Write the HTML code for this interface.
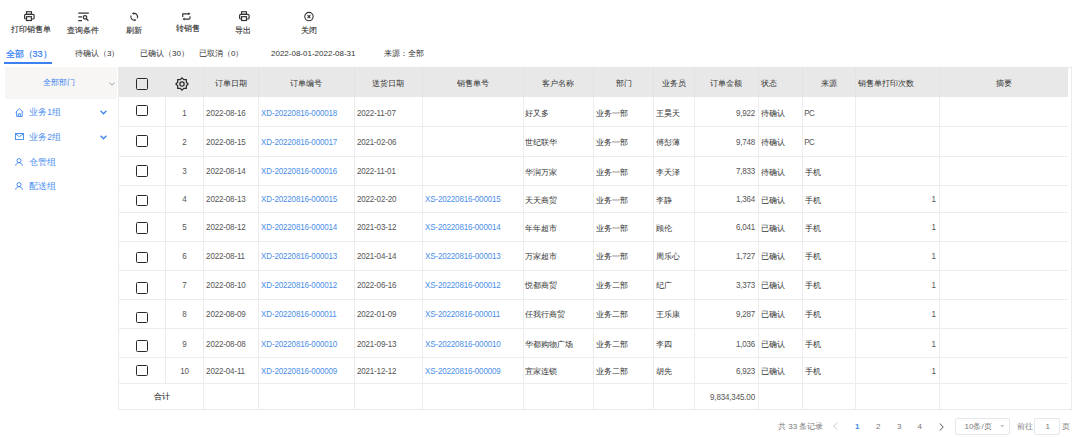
<!DOCTYPE html><html><head><meta charset="utf-8"><style>
*{box-sizing:border-box}
html,body{margin:0;padding:0}
body{width:1080px;height:437px;overflow:hidden;background:#fff;position:relative;font-family:"Liberation Sans",sans-serif;color:#333}
.a{position:absolute;white-space:nowrap;line-height:1}
.s{-webkit-text-stroke:0.12px currentColor}
.t8{font-size:8px}
.cb{position:absolute;width:11.8px;height:11.8px;border:1.7px solid #2a2a2a;border-radius:1.5px}
.hl{position:absolute;height:1px;background:#ededed}
.vl{position:absolute;width:1px;background:#ededed}
.lnk{color:#4b8ee8}
svg{position:absolute;overflow:visible}
</style></head><body><div class="a s" style="left:10.9px;top:25.6px;font-size:8px;color:#333">打印销售单</div>
<div class="a s" style="left:67.3px;top:27.400000000000002px;font-size:8px;color:#333">查询条件</div>
<div class="a s" style="left:126.2px;top:27.400000000000002px;font-size:8px;color:#333">刷新</div>
<div class="a s" style="left:175.6px;top:25.400000000000002px;font-size:8px;color:#333">转销售</div>
<div class="a s" style="left:235.4px;top:26.8px;font-size:8px;color:#333">导出</div>
<div class="a s" style="left:300.7px;top:27.1px;font-size:8px;color:#333">关闭</div>
<svg style="left:24px;top:11px" width="11" height="11" viewBox="0 0 11 11">
<rect x="2.55" y="0.75" width="4.9" height="2.6" fill="none" stroke="#333" stroke-width="1.15"/>
<rect x="0.6" y="3.3" width="9.5" height="4.7" rx="1.1" fill="none" stroke="#333" stroke-width="1.2"/>
<rect x="2.55" y="5.7" width="4.9" height="3.8" fill="#fff" stroke="#333" stroke-width="1.2"/>
</svg>
<svg style="left:238.5px;top:10.9px" width="11" height="11" viewBox="0 0 11 11">
<rect x="2.55" y="0.75" width="4.9" height="2.6" fill="none" stroke="#333" stroke-width="1.15"/>
<rect x="0.6" y="3.3" width="9.5" height="4.7" rx="1.1" fill="none" stroke="#333" stroke-width="1.2"/>
<rect x="2.55" y="5.7" width="4.9" height="3.8" fill="#fff" stroke="#333" stroke-width="1.2"/>
</svg>
<svg style="left:77.8px;top:12px" width="11" height="10" viewBox="0 0 11 10">
<path d="M0.3 1.1h10.5M0.3 4.8h3.7M0.3 8.6h3.7" stroke="#333" stroke-width="1.15" fill="none"/>
<circle cx="7.0" cy="5.3" r="1.75" fill="none" stroke="#333" stroke-width="1.25"/>
<path d="M8.3 6.7l2.1 2.1" stroke="#333" stroke-width="1.3"/>
</svg>
<svg style="left:129.8px;top:12.2px" width="9" height="10" viewBox="0 0 9 10">
<path d="M3.38 1.5A3.4 3.4 0 0 1 7.3 6.18" fill="none" stroke="#333" stroke-width="1.15"/>
<path d="M1.1 3.42A3.4 3.4 0 0 0 4.96 8.11" fill="none" stroke="#333" stroke-width="1.15"/>
<path d="M1.9 1.86L4.18 2.64L3.56 0.12z" fill="#333"/>
<path d="M6.42 7.78L4.76 9.48L4.18 6.96z" fill="#333"/>
</svg>
<svg style="left:181.7px;top:11.7px" width="10" height="9" viewBox="0 0 10 9">
<path d="M0.75 4.9V1.8h6.2" fill="none" stroke="#333" stroke-width="1.15"/>
<path d="M8.0 4.2v1.9a1 1 0 0 1 -1 1H2.2" fill="none" stroke="#333" stroke-width="1.15"/>
<path d="M6.4 0.3L8.5 1.8 6.4 3.3z" fill="#333"/>
<path d="M2.6 5.6L0.5 7.1 2.6 8.6z" fill="#333"/>
</svg>
<svg style="left:304.4px;top:12.3px" width="10" height="10" viewBox="0 0 10 10">
<circle cx="4.95" cy="4.6" r="4.2" fill="none" stroke="#333" stroke-width="1.1"/>
<path d="M3.5 3.15l2.9 2.9M6.4 3.15l-2.9 2.9" stroke="#333" stroke-width="1.15"/>
</svg>
<div class="a" style="left:5.5px;top:49.5px;font-size:9px;color:#2f7cf6;font-weight:normal;-webkit-text-stroke:0.2px #2f7cf6">全部（33）</div>
<div style="position:absolute;left:4px;top:61.8px;width:48px;height:2px;background:#3b82f0"></div>
<div class="a" style="left:75px;top:50px;font-size:8px;color:#333">待确认（3）</div>
<div class="a" style="left:140px;top:50px;font-size:8px;color:#333">已确认（30）</div>
<div class="a" style="left:199px;top:50px;font-size:8px;color:#333">已取消（0）</div>
<div class="a l" style="left:271px;top:49.8px;font-size:8px;color:#333">2022-08-01-2022-08-31</div>
<div class="a" style="left:384px;top:50px;font-size:8px;color:#333">来源：全部</div>
<div style="position:absolute;left:5px;top:67px;width:112px;height:31.5px;background:#f8f5f5"></div>
<div class="a" style="left:43.2px;top:79.2px;font-size:8px;color:#3d86ee">全部部门</div>
<svg style="left:109px;top:81.5px" width="6" height="4" viewBox="0 0 6 4"><path d="M0.4 0.5L3 3.2 5.6 0.5" fill="none" stroke="#999" stroke-width="0.9"/></svg>
<div class="a" style="left:29.2px;top:107.9px;font-size:8.5px;color:#4a8ef0">业务1组</div>
<svg style="left:14.8px;top:108.0px" width="9" height="9" viewBox="0 0 9 9"><path d="M0.6 4.2L4.4 0.7 8.2 4.2M1.6 3.4V8.4h5.6V3.4M3.4 8.4V5.8h2v2.6" fill="none" stroke="#3d86ee" stroke-width="0.9"/></svg>
<svg style="left:99.7px;top:110.2px" width="7" height="5" viewBox="0 0 7 5"><path d="M0.6 0.8L3.5 3.8 6.4 0.8" fill="none" stroke="#3d86ee" stroke-width="1.3"/></svg>
<div class="a" style="left:29.2px;top:132.89999999999998px;font-size:8.5px;color:#4a8ef0">业务2组</div>
<svg style="left:14.8px;top:133.0px" width="9" height="7" viewBox="0 0 9 7"><rect x="0.5" y="0.5" width="8" height="6" fill="none" stroke="#3d86ee" stroke-width="0.9"/><path d="M0.8 1L4.5 3.8 8.2 1" fill="none" stroke="#3d86ee" stroke-width="0.9"/></svg>
<svg style="left:99.7px;top:135.2px" width="7" height="5" viewBox="0 0 7 5"><path d="M0.6 0.8L3.5 3.8 6.4 0.8" fill="none" stroke="#3d86ee" stroke-width="1.3"/></svg>
<div class="a" style="left:29.2px;top:157.89999999999998px;font-size:8.5px;color:#4a8ef0">仓管组</div>
<svg style="left:15px;top:158.2px" width="8" height="8" viewBox="0 0 8 8"><circle cx="4" cy="2.6" r="2" fill="none" stroke="#3d86ee" stroke-width="0.9"/><path d="M0.8 7.8C0.8 5.6 2.2 4.8 4 4.8S7.2 5.6 7.2 7.8" fill="none" stroke="#3d86ee" stroke-width="0.9"/></svg>
<div class="a" style="left:29.2px;top:181.89999999999998px;font-size:8.5px;color:#4a8ef0">配送组</div>
<svg style="left:15px;top:182.2px" width="8" height="8" viewBox="0 0 8 8"><circle cx="4" cy="2.6" r="2" fill="none" stroke="#3d86ee" stroke-width="0.9"/><path d="M0.8 7.8C0.8 5.6 2.2 4.8 4 4.8S7.2 5.6 7.2 7.8" fill="none" stroke="#3d86ee" stroke-width="0.9"/></svg>
<div style="position:absolute;left:118px;top:67px;width:954px;height:343px;border:1px solid #ebebeb"></div>
<div style="position:absolute;left:118px;top:67px;width:950.4000000000001px;height:30px;background:#e8e8e8"></div>
<div class="vl" style="left:203px;top:67px;height:30px;background:#e2e2e2"></div>
<div class="vl" style="left:258px;top:67px;height:30px;background:#e2e2e2"></div>
<div class="vl" style="left:354px;top:67px;height:30px;background:#e2e2e2"></div>
<div class="vl" style="left:422px;top:67px;height:30px;background:#e2e2e2"></div>
<div class="vl" style="left:523px;top:67px;height:30px;background:#e2e2e2"></div>
<div class="vl" style="left:593px;top:67px;height:30px;background:#e2e2e2"></div>
<div class="vl" style="left:653px;top:67px;height:30px;background:#e2e2e2"></div>
<div class="vl" style="left:694px;top:67px;height:30px;background:#e2e2e2"></div>
<div class="vl" style="left:758px;top:67px;height:30px;background:#e2e2e2"></div>
<div class="vl" style="left:802px;top:67px;height:30px;background:#e2e2e2"></div>
<div class="vl" style="left:855px;top:67px;height:30px;background:#e2e2e2"></div>
<div class="vl" style="left:939px;top:67px;height:30px;background:#e2e2e2"></div>
<div class="vl" style="left:165px;top:97px;height:286px"></div>
<div class="vl" style="left:203px;top:97px;height:312px"></div>
<div class="vl" style="left:258px;top:97px;height:312px"></div>
<div class="vl" style="left:354px;top:97px;height:312px"></div>
<div class="vl" style="left:422px;top:97px;height:312px"></div>
<div class="vl" style="left:523px;top:97px;height:312px"></div>
<div class="vl" style="left:593px;top:97px;height:312px"></div>
<div class="vl" style="left:653px;top:97px;height:312px"></div>
<div class="vl" style="left:694px;top:97px;height:312px"></div>
<div class="vl" style="left:758px;top:97px;height:312px"></div>
<div class="vl" style="left:802px;top:97px;height:312px"></div>
<div class="vl" style="left:855px;top:97px;height:312px"></div>
<div class="vl" style="left:939px;top:97px;height:312px"></div>
<div class="hl" style="left:118px;top:126px;width:950.4000000000001px"></div>
<div class="hl" style="left:118px;top:156px;width:950.4000000000001px"></div>
<div class="hl" style="left:118px;top:185px;width:950.4000000000001px"></div>
<div class="hl" style="left:118px;top:212px;width:950.4000000000001px"></div>
<div class="hl" style="left:118px;top:241px;width:950.4000000000001px"></div>
<div class="hl" style="left:118px;top:270px;width:950.4000000000001px"></div>
<div class="hl" style="left:118px;top:299px;width:950.4000000000001px"></div>
<div class="hl" style="left:118px;top:328px;width:950.4000000000001px"></div>
<div class="hl" style="left:118px;top:357px;width:950.4000000000001px"></div>
<div class="hl" style="left:118px;top:383px;width:950.4000000000001px"></div>
<div class="a" style="left:203.6px;top:79.8px;width:54.70000000000002px;text-align:center;font-size:8px;color:#333">订单日期</div>
<div class="a" style="left:258.3px;top:79.8px;width:96.09999999999997px;text-align:center;font-size:8px;color:#333">订单编号</div>
<div class="a" style="left:354.4px;top:79.8px;width:68.0px;text-align:center;font-size:8px;color:#333">送货日期</div>
<div class="a" style="left:422.4px;top:79.8px;width:100.60000000000002px;text-align:center;font-size:8px;color:#333">销售单号</div>
<div class="a" style="left:523px;top:79.8px;width:70.60000000000002px;text-align:center;font-size:8px;color:#333">客户名称</div>
<div class="a" style="left:593.6px;top:79.8px;width:60.0px;text-align:center;font-size:8px;color:#333">部门</div>
<div class="a" style="left:653.6px;top:79.8px;width:41.10000000000002px;text-align:center;font-size:8px;color:#333">业务员</div>
<div class="a" style="left:694.7px;top:79.8px;width:63.59999999999991px;text-align:center;font-size:8px;color:#333">订单金额</div>
<div class="a" style="left:760.8px;top:79.8px;font-size:8px;color:#333">状态</div>
<div class="a" style="left:802.4px;top:79.8px;width:52.60000000000002px;text-align:center;font-size:8px;color:#333">来源</div>
<div class="a" style="left:857.5px;top:79.8px;font-size:8px;color:#333">销售单打印次数</div>
<div class="a" style="left:939.4px;top:79.8px;width:129.0000000000001px;text-align:center;font-size:8px;color:#333">摘要</div>
<div class="cb" style="left:136.3px;top:78.3px"></div>
<svg style="left:175px;top:77px" width="14" height="14" viewBox="0 0 14 14">
<path d="M7.00 0.90L8.80 2.66L11.31 2.69L11.34 5.20L13.10 7.00L11.34 8.80L11.31 11.31L8.80 11.34L7.00 13.10L5.20 11.34L2.69 11.31L2.66 8.80L0.90 7.00L2.66 5.20L2.69 2.69L5.20 2.66Z" fill="none" stroke="#2b2b2b" stroke-width="1.25" stroke-linejoin="miter"/>
<circle cx="7" cy="7" r="2.15" fill="none" stroke="#2b2b2b" stroke-width="1.3"/>
</svg>
<div class="cb" style="left:136.3px;top:104.5px"></div>
<div class="a l" style="left:165.6px;top:109.9px;width:38.0px;text-align:center;font-size:8px;color:#555;transform:scaleY(1.12);color:#555">1</div>
<div class="a l " style="left:206.1px;top:109.9px;font-size:8px;color:#555;transform:scaleY(1.12);letter-spacing:-0.15px;">2022-08-16</div>
<div class="a l " style="left:261.1px;top:109.9px;font-size:8px;color:#555;transform:scaleY(1.12);letter-spacing:-0.15px;color:#4b8ee8">XD-20220816-000018</div>
<div class="a l " style="left:356.9px;top:109.9px;font-size:8px;color:#555;transform:scaleY(1.12);letter-spacing:-0.15px;">2022-11-07</div>
<div class="a" style="left:525.2px;top:110.25px;font-size:8px;color:#333;">好又多</div>
<div class="a" style="left:596.2px;top:110.25px;font-size:8px;color:#333;">业务一部</div>
<div class="a" style="left:656.0px;top:110.25px;font-size:8px;color:#333;">王昊天</div>
<div class="a l" style="right:325.00000000000006px;top:109.9px;font-size:8px;color:#555;transform:scaleY(1.12);letter-spacing:-0.2px;">9,922</div>
<div class="a" style="left:760.6999999999999px;top:110.25px;font-size:8px;color:#333;">待确认</div>
<div class="a l " style="left:804.1999999999999px;top:109.9px;font-size:8px;color:#555;transform:scaleY(1.12);letter-spacing:-0.5px;">PC</div>
<div class="cb" style="left:136.3px;top:134.9px"></div>
<div class="a l" style="left:165.6px;top:138.6px;width:38.0px;text-align:center;font-size:8px;color:#555;transform:scaleY(1.12);color:#555">2</div>
<div class="a l " style="left:206.1px;top:138.6px;font-size:8px;color:#555;transform:scaleY(1.12);letter-spacing:-0.15px;">2022-08-15</div>
<div class="a l " style="left:261.1px;top:138.6px;font-size:8px;color:#555;transform:scaleY(1.12);letter-spacing:-0.15px;color:#4b8ee8">XD-20220816-000017</div>
<div class="a l " style="left:356.9px;top:138.6px;font-size:8px;color:#555;transform:scaleY(1.12);letter-spacing:-0.15px;">2021-02-06</div>
<div class="a" style="left:525.2px;top:138.95px;font-size:8px;color:#333;">世纪联华</div>
<div class="a" style="left:596.2px;top:138.95px;font-size:8px;color:#333;">业务一部</div>
<div class="a" style="left:656.0px;top:138.95px;font-size:8px;color:#333;">傅彭薄</div>
<div class="a l" style="right:325.00000000000006px;top:138.6px;font-size:8px;color:#555;transform:scaleY(1.12);letter-spacing:-0.2px;">9,748</div>
<div class="a" style="left:760.6999999999999px;top:138.95px;font-size:8px;color:#333;">待确认</div>
<div class="a l " style="left:804.1999999999999px;top:138.6px;font-size:8px;color:#555;transform:scaleY(1.12);letter-spacing:-0.5px;">PC</div>
<div class="cb" style="left:136.3px;top:165.3px"></div>
<div class="a l" style="left:165.6px;top:168.3px;width:38.0px;text-align:center;font-size:8px;color:#555;transform:scaleY(1.12);color:#555">3</div>
<div class="a l " style="left:206.1px;top:168.3px;font-size:8px;color:#555;transform:scaleY(1.12);letter-spacing:-0.15px;">2022-08-14</div>
<div class="a l " style="left:261.1px;top:168.3px;font-size:8px;color:#555;transform:scaleY(1.12);letter-spacing:-0.15px;color:#4b8ee8">XD-20220816-000016</div>
<div class="a l " style="left:356.9px;top:168.3px;font-size:8px;color:#555;transform:scaleY(1.12);letter-spacing:-0.15px;">2022-11-01</div>
<div class="a" style="left:525.2px;top:168.65px;font-size:8px;color:#333;">华润万家</div>
<div class="a" style="left:596.2px;top:168.65px;font-size:8px;color:#333;">业务一部</div>
<div class="a" style="left:656.0px;top:168.65px;font-size:8px;color:#333;">李天泽</div>
<div class="a l" style="right:325.00000000000006px;top:168.3px;font-size:8px;color:#555;transform:scaleY(1.12);letter-spacing:-0.2px;">7,833</div>
<div class="a" style="left:760.6999999999999px;top:168.65px;font-size:8px;color:#333;">待确认</div>
<div class="a" style="left:805.0px;top:168.65px;font-size:8px;color:#333;">手机</div>
<div class="cb" style="left:136.3px;top:194.6px"></div>
<div class="a l" style="left:165.6px;top:196.20000000000002px;width:38.0px;text-align:center;font-size:8px;color:#555;transform:scaleY(1.12);color:#555">4</div>
<div class="a l " style="left:206.1px;top:196.20000000000002px;font-size:8px;color:#555;transform:scaleY(1.12);letter-spacing:-0.15px;">2022-08-13</div>
<div class="a l " style="left:261.1px;top:196.20000000000002px;font-size:8px;color:#555;transform:scaleY(1.12);letter-spacing:-0.15px;color:#4b8ee8">XD-20220816-000015</div>
<div class="a l " style="left:356.9px;top:196.20000000000002px;font-size:8px;color:#555;transform:scaleY(1.12);letter-spacing:-0.15px;">2022-02-20</div>
<div class="a l " style="left:425.0px;top:196.20000000000002px;font-size:8px;color:#555;transform:scaleY(1.12);letter-spacing:-0.15px;color:#4b8ee8">XS-20220816-000015</div>
<div class="a" style="left:525.2px;top:196.55px;font-size:8px;color:#333;">天天商贸</div>
<div class="a" style="left:596.2px;top:196.55px;font-size:8px;color:#333;">业务一部</div>
<div class="a" style="left:656.0px;top:196.55px;font-size:8px;color:#333;">李静</div>
<div class="a l" style="right:325.00000000000006px;top:196.20000000000002px;font-size:8px;color:#555;transform:scaleY(1.12);letter-spacing:-0.2px;">1,364</div>
<div class="a" style="left:760.6999999999999px;top:196.55px;font-size:8px;color:#333;">已确认</div>
<div class="a" style="left:805.0px;top:196.55px;font-size:8px;color:#333;">手机</div>
<div class="a l" style="right:144.24999999999997px;top:196.20000000000002px;font-size:8px;color:#555;transform:scaleY(1.12);letter-spacing:-0.15px;">1</div>
<div class="cb" style="left:136.3px;top:222.1px"></div>
<div class="a l" style="left:165.6px;top:224.3px;width:38.0px;text-align:center;font-size:8px;color:#555;transform:scaleY(1.12);color:#555">5</div>
<div class="a l " style="left:206.1px;top:224.3px;font-size:8px;color:#555;transform:scaleY(1.12);letter-spacing:-0.15px;">2022-08-12</div>
<div class="a l " style="left:261.1px;top:224.3px;font-size:8px;color:#555;transform:scaleY(1.12);letter-spacing:-0.15px;color:#4b8ee8">XD-20220816-000014</div>
<div class="a l " style="left:356.9px;top:224.3px;font-size:8px;color:#555;transform:scaleY(1.12);letter-spacing:-0.15px;">2021-03-12</div>
<div class="a l " style="left:425.0px;top:224.3px;font-size:8px;color:#555;transform:scaleY(1.12);letter-spacing:-0.15px;color:#4b8ee8">XS-20220816-000014</div>
<div class="a" style="left:525.2px;top:224.65px;font-size:8px;color:#333;">年年超市</div>
<div class="a" style="left:596.2px;top:224.65px;font-size:8px;color:#333;">业务一部</div>
<div class="a" style="left:656.0px;top:224.65px;font-size:8px;color:#333;">顾伦</div>
<div class="a l" style="right:325.00000000000006px;top:224.3px;font-size:8px;color:#555;transform:scaleY(1.12);letter-spacing:-0.2px;">6,041</div>
<div class="a" style="left:760.6999999999999px;top:224.65px;font-size:8px;color:#333;">已确认</div>
<div class="a" style="left:805.0px;top:224.65px;font-size:8px;color:#333;">手机</div>
<div class="a l" style="right:144.24999999999997px;top:224.3px;font-size:8px;color:#555;transform:scaleY(1.12);letter-spacing:-0.15px;">1</div>
<div class="cb" style="left:136.3px;top:251.5px"></div>
<div class="a l" style="left:165.6px;top:253.1px;width:38.0px;text-align:center;font-size:8px;color:#555;transform:scaleY(1.12);color:#555">6</div>
<div class="a l " style="left:206.1px;top:253.1px;font-size:8px;color:#555;transform:scaleY(1.12);letter-spacing:-0.15px;">2022-08-11</div>
<div class="a l " style="left:261.1px;top:253.1px;font-size:8px;color:#555;transform:scaleY(1.12);letter-spacing:-0.15px;color:#4b8ee8">XD-20220816-000013</div>
<div class="a l " style="left:356.9px;top:253.1px;font-size:8px;color:#555;transform:scaleY(1.12);letter-spacing:-0.15px;">2021-04-14</div>
<div class="a l " style="left:425.0px;top:253.1px;font-size:8px;color:#555;transform:scaleY(1.12);letter-spacing:-0.15px;color:#4b8ee8">XS-20220816-000013</div>
<div class="a" style="left:525.2px;top:253.45px;font-size:8px;color:#333;">万家超市</div>
<div class="a" style="left:596.2px;top:253.45px;font-size:8px;color:#333;">业务一部</div>
<div class="a" style="left:656.0px;top:253.45px;font-size:8px;color:#333;">周乐心</div>
<div class="a l" style="right:325.00000000000006px;top:253.1px;font-size:8px;color:#555;transform:scaleY(1.12);letter-spacing:-0.2px;">1,727</div>
<div class="a" style="left:760.6999999999999px;top:253.45px;font-size:8px;color:#333;">已确认</div>
<div class="a" style="left:805.0px;top:253.45px;font-size:8px;color:#333;">手机</div>
<div class="a l" style="right:144.24999999999997px;top:253.1px;font-size:8px;color:#555;transform:scaleY(1.12);letter-spacing:-0.15px;">1</div>
<div class="cb" style="left:136.3px;top:282.0px"></div>
<div class="a l" style="left:165.6px;top:282.09999999999997px;width:38.0px;text-align:center;font-size:8px;color:#555;transform:scaleY(1.12);color:#555">7</div>
<div class="a l " style="left:206.1px;top:282.09999999999997px;font-size:8px;color:#555;transform:scaleY(1.12);letter-spacing:-0.15px;">2022-08-10</div>
<div class="a l " style="left:261.1px;top:282.09999999999997px;font-size:8px;color:#555;transform:scaleY(1.12);letter-spacing:-0.15px;color:#4b8ee8">XD-20220816-000012</div>
<div class="a l " style="left:356.9px;top:282.09999999999997px;font-size:8px;color:#555;transform:scaleY(1.12);letter-spacing:-0.15px;">2022-06-16</div>
<div class="a l " style="left:425.0px;top:282.09999999999997px;font-size:8px;color:#555;transform:scaleY(1.12);letter-spacing:-0.15px;color:#4b8ee8">XS-20220816-000012</div>
<div class="a" style="left:525.2px;top:282.45px;font-size:8px;color:#333;">悦都商贸</div>
<div class="a" style="left:596.2px;top:282.45px;font-size:8px;color:#333;">业务二部</div>
<div class="a" style="left:656.0px;top:282.45px;font-size:8px;color:#333;">纪广</div>
<div class="a l" style="right:325.00000000000006px;top:282.09999999999997px;font-size:8px;color:#555;transform:scaleY(1.12);letter-spacing:-0.2px;">3,373</div>
<div class="a" style="left:760.6999999999999px;top:282.45px;font-size:8px;color:#333;">已确认</div>
<div class="a" style="left:805.0px;top:282.45px;font-size:8px;color:#333;">手机</div>
<div class="a l" style="right:144.24999999999997px;top:282.09999999999997px;font-size:8px;color:#555;transform:scaleY(1.12);letter-spacing:-0.15px;">1</div>
<div class="cb" style="left:136.3px;top:311.7px"></div>
<div class="a l" style="left:165.6px;top:310.7px;width:38.0px;text-align:center;font-size:8px;color:#555;transform:scaleY(1.12);color:#555">8</div>
<div class="a l " style="left:206.1px;top:310.7px;font-size:8px;color:#555;transform:scaleY(1.12);letter-spacing:-0.15px;">2022-08-09</div>
<div class="a l " style="left:261.1px;top:310.7px;font-size:8px;color:#555;transform:scaleY(1.12);letter-spacing:-0.15px;color:#4b8ee8">XD-20220816-000011</div>
<div class="a l " style="left:356.9px;top:310.7px;font-size:8px;color:#555;transform:scaleY(1.12);letter-spacing:-0.15px;">2022-01-09</div>
<div class="a l " style="left:425.0px;top:310.7px;font-size:8px;color:#555;transform:scaleY(1.12);letter-spacing:-0.15px;color:#4b8ee8">XS-20220816-000011</div>
<div class="a" style="left:525.2px;top:311.05px;font-size:8px;color:#333;">任我行商贸</div>
<div class="a" style="left:596.2px;top:311.05px;font-size:8px;color:#333;">业务二部</div>
<div class="a" style="left:656.0px;top:311.05px;font-size:8px;color:#333;">王乐康</div>
<div class="a l" style="right:325.00000000000006px;top:310.7px;font-size:8px;color:#555;transform:scaleY(1.12);letter-spacing:-0.2px;">9,287</div>
<div class="a" style="left:760.6999999999999px;top:311.05px;font-size:8px;color:#333;">已确认</div>
<div class="a" style="left:805.0px;top:311.05px;font-size:8px;color:#333;">手机</div>
<div class="a l" style="right:144.24999999999997px;top:310.7px;font-size:8px;color:#555;transform:scaleY(1.12);letter-spacing:-0.15px;">1</div>
<div class="cb" style="left:136.3px;top:339.9px"></div>
<div class="a l" style="left:165.6px;top:340.5px;width:38.0px;text-align:center;font-size:8px;color:#555;transform:scaleY(1.12);color:#555">9</div>
<div class="a l " style="left:206.1px;top:340.5px;font-size:8px;color:#555;transform:scaleY(1.12);letter-spacing:-0.15px;">2022-08-08</div>
<div class="a l " style="left:261.1px;top:340.5px;font-size:8px;color:#555;transform:scaleY(1.12);letter-spacing:-0.15px;color:#4b8ee8">XD-20220816-000010</div>
<div class="a l " style="left:356.9px;top:340.5px;font-size:8px;color:#555;transform:scaleY(1.12);letter-spacing:-0.15px;">2021-09-13</div>
<div class="a l " style="left:425.0px;top:340.5px;font-size:8px;color:#555;transform:scaleY(1.12);letter-spacing:-0.15px;color:#4b8ee8">XS-20220816-000010</div>
<div class="a" style="left:525.2px;top:340.85px;font-size:8px;color:#333;">华都购物广场</div>
<div class="a" style="left:596.2px;top:340.85px;font-size:8px;color:#333;">业务二部</div>
<div class="a" style="left:656.0px;top:340.85px;font-size:8px;color:#333;">李四</div>
<div class="a l" style="right:325.00000000000006px;top:340.5px;font-size:8px;color:#555;transform:scaleY(1.12);letter-spacing:-0.2px;">1,036</div>
<div class="a" style="left:760.6999999999999px;top:340.85px;font-size:8px;color:#333;">已确认</div>
<div class="a" style="left:805.0px;top:340.85px;font-size:8px;color:#333;">手机</div>
<div class="a l" style="right:144.24999999999997px;top:340.5px;font-size:8px;color:#555;transform:scaleY(1.12);letter-spacing:-0.15px;">1</div>
<div class="cb" style="left:136.3px;top:364.5px"></div>
<div class="a l" style="left:165.6px;top:367.9px;width:38.0px;text-align:center;font-size:8px;color:#555;transform:scaleY(1.12);color:#555">10</div>
<div class="a l " style="left:206.1px;top:367.9px;font-size:8px;color:#555;transform:scaleY(1.12);letter-spacing:-0.15px;">2022-04-11</div>
<div class="a l " style="left:261.1px;top:367.9px;font-size:8px;color:#555;transform:scaleY(1.12);letter-spacing:-0.15px;color:#4b8ee8">XD-20220816-000009</div>
<div class="a l " style="left:356.9px;top:367.9px;font-size:8px;color:#555;transform:scaleY(1.12);letter-spacing:-0.15px;">2021-12-12</div>
<div class="a l " style="left:425.0px;top:367.9px;font-size:8px;color:#555;transform:scaleY(1.12);letter-spacing:-0.15px;color:#4b8ee8">XS-20220816-000009</div>
<div class="a" style="left:525.2px;top:368.25px;font-size:8px;color:#333;">宜家连锁</div>
<div class="a" style="left:596.2px;top:368.25px;font-size:8px;color:#333;">业务二部</div>
<div class="a" style="left:656.0px;top:368.25px;font-size:8px;color:#333;">胡先</div>
<div class="a l" style="right:325.00000000000006px;top:367.9px;font-size:8px;color:#555;transform:scaleY(1.12);letter-spacing:-0.2px;">6,923</div>
<div class="a" style="left:760.6999999999999px;top:368.25px;font-size:8px;color:#333;">已确认</div>
<div class="a" style="left:805.0px;top:368.25px;font-size:8px;color:#333;">手机</div>
<div class="a l" style="right:144.24999999999997px;top:367.9px;font-size:8px;color:#555;transform:scaleY(1.12);letter-spacing:-0.15px;">1</div>
<div class="a s" style="left:118.8px;top:392.8px;width:85.6px;text-align:center;font-size:8px;color:#333">合计</div>
<div class="a l" style="right:325.05000000000007px;top:393.65px;font-size:8px;color:#555;transform:scaleY(1.12);letter-spacing:-0.15px;">9,834,345.00</div>
<div class="a" style="left:778px;top:422.5px;font-size:8px;color:#777">共 33 条记录</div>
<svg style="left:833.4px;top:422.2px" width="5" height="8" viewBox="0 0 5 8"><path d="M4.2 0.5L0.8 4 4.2 7.5" fill="none" stroke="#c0c4cc" stroke-width="0.9"/></svg>
<div class="a" style="left:855.0px;top:422.5px;font-size:8px;color:#3a86f0;font-weight:bold">1</div>
<div class="a" style="left:876px;top:422.5px;font-size:8px;color:#777">2</div>
<div class="a" style="left:897px;top:422.5px;font-size:8px;color:#777">3</div>
<div class="a" style="left:917.6px;top:422.5px;font-size:8px;color:#777">4</div>
<svg style="left:939.3px;top:423px" width="5" height="8" viewBox="0 0 5 8"><path d="M0.8 0.5L4.2 4 0.8 7.5" fill="none" stroke="#444" stroke-width="0.9"/></svg>
<div style="position:absolute;left:955.3px;top:417.5px;width:54.7px;height:17px;border:1px solid #e4e7ed;border-radius:2px"></div>
<div class="a" style="left:964.6px;top:422.5px;font-size:8px;color:#777">10条/页</div>
<svg style="left:1000.3px;top:424.9px" width="5" height="3" viewBox="0 0 5 3"><path d="M0 0h4.5L2.25 2.4z" fill="#c0c4cc"/></svg>
<div class="a" style="left:1016.5px;top:422.5px;font-size:8px;color:#777">前往</div>
<div style="position:absolute;left:1034.4px;top:417.5px;width:25.5px;height:17px;border:1px solid #e4e7ed;border-radius:2px"></div>
<div class="a" style="left:1045.5px;top:422.5px;font-size:8px;color:#777">1</div>
<div class="a" style="left:1061.9px;top:422.5px;font-size:8px;color:#777">页</div></body></html>
